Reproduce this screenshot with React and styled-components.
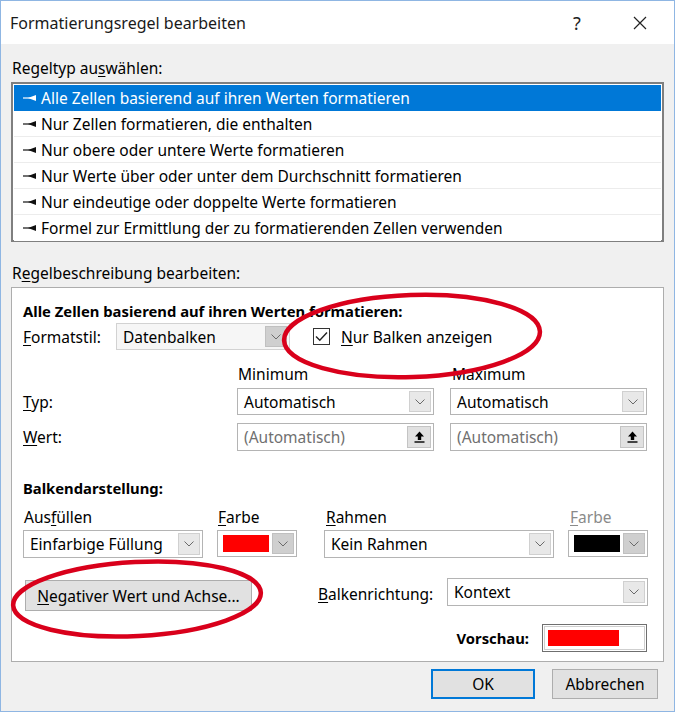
import React from 'react';
import styled, { createGlobalStyle } from 'styled-components';

const GlobalStyle = createGlobalStyle`
  html, body { margin: 0; padding: 0; background: #ffffff; }
  body { font-family: "Noto Sans", "Open Sans", sans-serif; font-size: 15.5px; color: #000; }
  * { box-sizing: border-box; }
`;

const rules = [
  'Alle Zellen basierend auf ihren Werten formatieren',
  'Nur Zellen formatieren, die enthalten',
  'Nur obere oder untere Werte formatieren',
  'Nur Werte über oder unter dem Durchschnitt formatieren',
  'Nur eindeutige oder doppelte Werte formatieren',
  'Formel zur Ermittlung der zu formatierenden Zellen verwenden',
];

const Window = styled.div`
  position: relative;
  width: 675px;
  height: 712px;
  border: 1px solid #8fb6e3;
  background: #f0f0f0;
  display: flex;
  flex-direction: column;
  overflow: hidden;
`;

const TitleBar = styled.div`
  height: 43px;
  background: #fff;
  display: flex;
  align-items: center;
  padding: 0 14px 0 9px;
`;

const Title = styled.div`
  flex: 1;
  font-size: 16px;
  color: #1a1a1a;
`;

const TitleButton = styled.div`
  width: 40px;
  display: flex;
  justify-content: center;
  align-items: center;
  font-size: 18px;
  color: #222;
  margin-left: ${p => p.$gap || 0}px;
`;

const Body = styled.div`
  padding: 14px 10px 0 10px;
  display: flex;
  flex-direction: column;
`;

const GroupLabel = styled.div`
  line-height: 20px;
  margin-top: ${p => p.$top || 0}px;
  padding-left: 1px;
`;

const Key = styled.span`
  text-decoration: underline;
  text-underline-offset: 2px;
`;

const ListBox = styled.div`
  margin-top: 4px;
  height: 160px;
  border: 2px solid #7f7f7f;
  background: #fff;
`;

const ListRow = styled.div`
  height: 26px;
  display: flex;
  align-items: center;
  padding-left: 9px;
  gap: 5px;
  background: ${p => (p.$active ? '#0078d7' : '#fff')};
  color: ${p => (p.$active ? '#fff' : '#000')};
  border-bottom: 1px solid ${p => (p.$active ? '#0078d7' : '#ececec')};
  margin: 0 1px;
  &:first-child { margin-top: 1px; }
  &:last-child { border-bottom: none; }
`;

const Panel = styled.div`
  margin-top: 4px;
  border: 1px solid #adadad;
  background: #fff;
  padding: 13px 16px 9px 11px;
  display: flex;
  flex-direction: column;
`;

const Heading = styled.div`
  font-weight: 700;
  font-size: 14.8px;
  line-height: 20px;
  margin-top: ${p => p.$top || 0}px;
`;

const Row = styled.div`
  display: flex;
  align-items: ${p => p.$align || 'center'};
  margin-top: ${p => p.$top || 0}px;
`;

const Label = styled.div`
  line-height: 20px;
  flex-shrink: 0;
  width: ${p => (p.$w ? `${p.$w}px` : 'auto')};
  margin-left: ${p => p.$left || 0}px;
  margin-top: ${p => p.$top || 0}px;
  padding-left: ${p => p.$pad || 0}px;
  color: ${p => (p.$dim ? '#8a8a8a' : '#000')};
  white-space: nowrap;
`;

const Combo = styled.div`
  flex-shrink: 0;
  width: ${p => p.$w}px;
  height: ${p => p.$h || 27}px;
  border: 1px solid ${p => (p.$soft ? '#d2d2d2' : '#b4b4b4')};
  background: ${p => (p.$soft ? '#f6f6f6' : '#fff')};
  display: flex;
  align-items: center;
  padding: 2px;
  margin-left: ${p => p.$left || 0}px;
`;

const ComboText = styled.div`
  flex: 1;
  padding-left: 4px;
  color: ${p => (p.$muted ? '#707070' : '#000')};
  white-space: nowrap;
  overflow: hidden;
`;

const ArrowBox = styled.div`
  width: 22px;
  align-self: stretch;
  display: flex;
  align-items: center;
  justify-content: center;
  background: ${p => (p.$dark ? '#cfcfcf' : '#e8e8e8')};
  border: 1px solid ${p => (p.$dark ? '#c0c0c0' : '#d0d0d0')};
`;

const PickButton = styled.div`
  width: 24px;
  align-self: stretch;
  display: flex;
  align-items: center;
  justify-content: center;
  background: #e1e1e1;
  border: 1px solid #c4c4c4;
`;

const Swatch = styled.div`
  flex: 1;
  align-self: stretch;
  margin: 2px 3px 2px 3px;
  background: ${p => p.$color};
`;

const CheckBox = styled.div`
  width: 17px;
  height: 17px;
  flex-shrink: 0;
  border: 1px solid #333;
  margin-left: 23px;
  margin-right: 11px;
  display: flex;
  align-items: center;
  justify-content: center;
`;

const Field = styled.div`
  display: flex;
  flex-direction: column;
  flex-shrink: 0;
  width: ${p => p.$w}px;
  margin-left: ${p => p.$left || 0}px;
  gap: 3px;
`;

const PushButton = styled.div`
  flex-shrink: 0;
  width: ${p => p.$w}px;
  height: ${p => p.$h || 30}px;
  margin-left: ${p => p.$left || 0}px;
  margin-top: ${p => p.$top || 0}px;
  background: #e1e1e1;
  border: ${p => (p.$primary ? '2px solid #0078d7' : '1px solid #adadad')};
  display: flex;
  align-items: center;
  justify-content: center;
  white-space: nowrap;
`;

const PreviewRow = styled.div`
  display: flex;
  justify-content: flex-end;
  align-items: center;
  gap: 13px;
  margin-top: 13px;
`;

const Preview = styled.div`
  width: 105px;
  height: 28px;
  border: 1px solid #6f6f6f;
  box-shadow: inset 0 0 0 1px #fff, inset 0 0 0 2px #cfcfcf;
  padding: 5px 27px 5px 5px;
`;

const PreviewBar = styled.div`
  height: 100%;
  background: #ff0000;
`;

const Footer = styled.div`
  display: flex;
  justify-content: flex-end;
  gap: 17px;
  padding: 7px 6px 0 0;
`;

const Overlay = styled.svg`
  position: absolute;
  left: -1px;
  top: -1px;
  pointer-events: none;
`;

const Pointer = ({ light }) => (
  <svg width="13" height="8" viewBox="0 0 13 8">
    <path d="M0 4 H8" stroke={light ? '#fff' : '#111'} strokeWidth="1.2" />
    <path d="M5 4 L13 1 V7 Z" fill={light ? '#fff' : '#111'} />
  </svg>
);

const Chevron = () => (
  <svg width="10" height="6" viewBox="0 0 10 6">
    <polyline points="0.5,0.5 5,5 9.5,0.5" fill="none" stroke="#6a6a6a" strokeWidth="1" />
  </svg>
);

const UpArrow = () => (
  <svg width="11" height="12" viewBox="0 0 11 12">
    <path d="M5.5 0.5 L1 5.5 H3.8 V9 H7.2 V5.5 H10 Z" fill="#000" />
    <rect x="0.5" y="10.3" width="10" height="1.4" fill="#000" />
  </svg>
);

const CloseIcon = () => (
  <svg width="14" height="14" viewBox="0 0 14 14">
    <path d="M1 1 L13 13 M13 1 L1 13" stroke="#222" strokeWidth="1.2" />
  </svg>
);

const Check = () => (
  <svg width="13" height="11" viewBox="0 0 13 11">
    <polyline points="1,5.5 4.8,9.3 12,1.5" fill="none" stroke="#222" strokeWidth="1.4" />
  </svg>
);

const Select = ({ w, h, text, muted, soft, dark, left }) => (
  <Combo $w={w} $h={h} $soft={soft} $left={left}>
    <ComboText $muted={muted}>{text}</ComboText>
    <ArrowBox $dark={dark}><Chevron /></ArrowBox>
  </Combo>
);

const ValueInput = ({ left }) => (
  <Combo $w={197} $h={28} $left={left}>
    <ComboText $muted>(Automatisch)</ComboText>
    <PickButton><UpArrow /></PickButton>
  </Combo>
);

const ColorSelect = ({ w, color }) => (
  <Combo $w={w}>
    <Swatch $color={color} />
    <ArrowBox $dark><Chevron /></ArrowBox>
  </Combo>
);

export default function App() {
  return (
    <>
      <GlobalStyle />
      <Window>
        <TitleBar>
          <Title>Formatierungsregel bearbeiten</Title>
          <TitleButton>?</TitleButton>
          <TitleButton $gap={23}><CloseIcon /></TitleButton>
        </TitleBar>

        <Body>
          <GroupLabel>Regeltyp au<Key>s</Key>wählen:</GroupLabel>
          <ListBox>
            {rules.map((r, i) => (
              <ListRow key={r} $active={i === 0}>
                <Pointer light={i === 0} />
                <span>{r}</span>
              </ListRow>
            ))}
          </ListBox>

          <GroupLabel $top={21}>R<Key>e</Key>gelbeschreibung bearbeiten:</GroupLabel>
          <Panel>
            <Heading>Alle Zellen basierend auf ihren Werten formatieren:</Heading>
            <Row $top={2}>
              <Label $w={93}><Key>F</Key>ormatstil:</Label>
              <Select w={174} text="Datenbalken" soft dark />
              <CheckBox><Check /></CheckBox>
              <Label><Key>N</Key>ur Balken anzeigen</Label>
            </Row>

            <Row $top={14}>
              <Label $w={214} />
              <Label $w={213} $pad={1}>Minimum</Label>
              <Label $pad={2}>Maximum</Label>
            </Row>
            <Row $top={4}>
              <Label $w={214}><Key>T</Key>yp:</Label>
              <Select w={197} text="Automatisch" />
              <Select w={197} left={16} text="Automatisch" />
            </Row>
            <Row $top={8}>
              <Label $w={214}><Key>W</Key>ert:</Label>
              <ValueInput />
              <ValueInput left={16} />
            </Row>

            <Heading $top={27}>Balkendarstellung:</Heading>
            <Row $top={9} $align="flex-start">
              <Field $w={180}>
                <Label $pad={1}>Aus<Key>f</Key>üllen</Label>
                <Select w={180} h={28} text="Einfarbige Füllung" />
              </Field>
              <Field $w={80} $left={14}>
                <Label $pad={1}><Key>F</Key>arbe</Label>
                <ColorSelect w={80} color="#ff0000" />
              </Field>
              <Field $w={230} $left={27}>
                <Label $pad={2}><Key>R</Key>ahmen</Label>
                <Select w={230} h={28} text="Kein Rahmen" />
              </Field>
              <Field $w={80} $left={14}>
                <Label $pad={2} $dim><Key>F</Key>arbe</Label>
                <ColorSelect w={80} color="#000000" />
              </Field>
            </Row>

            <Row $top={20} $align="flex-start">
              <PushButton $w={227} $h={31} $left={2} $top={2}>
                <span><Key>N</Key>egativer Wert und Achse...</span>
              </PushButton>
              <Label $left={66} $w={129} $top={6}>
                <Key>B</Key>alkenrichtung:
              </Label>
              <Select w={201} h={28} text="Kontext" />
            </Row>

            <PreviewRow>
              <Heading>Vorschau:</Heading>
              <Preview><PreviewBar /></Preview>
            </PreviewRow>
          </Panel>

          <Footer>
            <PushButton $w={104} $primary>OK</PushButton>
            <PushButton $w={106}>Abbrechen</PushButton>
          </Footer>
        </Body>

        <Overlay width="675" height="712" viewBox="0 0 675 712">
          <ellipse cx="412" cy="336" rx="128" ry="41" transform="rotate(-2 412 336)"
            fill="none" stroke="#d9001b" strokeWidth="4.5" />
          <ellipse cx="137" cy="599" rx="124" ry="37" transform="rotate(-3 137 599)"
            fill="none" stroke="#d9001b" strokeWidth="4.5" />
        </Overlay>
      </Window>
    </>
  );
}
